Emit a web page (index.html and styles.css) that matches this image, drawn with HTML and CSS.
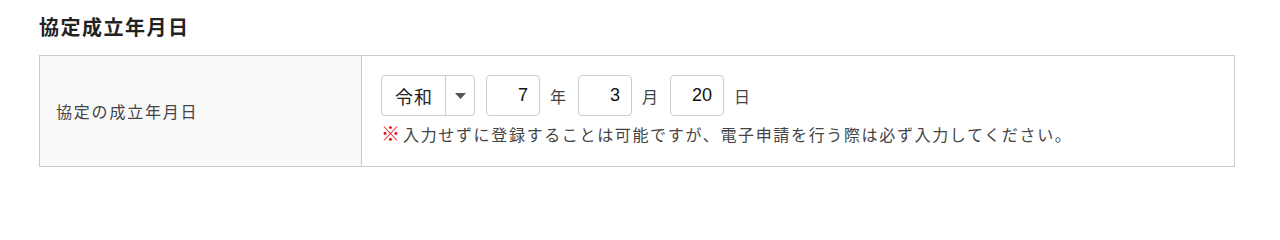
FILE: index.html
```html
<!DOCTYPE html>
<html lang="ja">
<head>
<meta charset="utf-8">
<title>協定成立年月日</title>
<link rel="stylesheet" href="styles.css">
</head>
<body>
<main class="page">
  <h2 class="section-title">協定成立年月日</h2>
  <table class="form-table">
    <tr>
      <th class="label-cell">協定の成立年月日</th>
      <td class="field-cell">
        <div class="date-row">
          <div class="era-select">
            <span class="era-value">令和</span>
            <span class="era-caret"><svg width="11" height="6" viewBox="0 0 11 6"><path d="M0 0 H11 L5.5 6 Z" fill="#555"/></svg></span>
          </div>
          <input class="num-input" type="text" value="7">
          <span class="unit">年</span>
          <input class="num-input" type="text" value="3">
          <span class="unit">月</span>
          <input class="num-input" type="text" value="20">
          <span class="unit">日</span>
        </div>
        <p class="note"><span class="mark">※</span>入力せずに登録することは可能ですが、電子申請を行う際は必ず入力してください。</p>
      </td>
    </tr>
  </table>
</main>
</body>
</html>
```

FILE: styles.css
```css
* { box-sizing: border-box; }
body {
  margin: 0;
  background: #fff;
  color: #333;
  font-family: "Noto Sans CJK JP", "Noto Sans", sans-serif;
}
.page {
  width: 1196px;
  margin-left: 39px;
}
.section-title {
  margin: 12px 0 13px;
  font-size: 20px;
  line-height: 30px;
  font-weight: bold;
  color: #222;
  letter-spacing: 1.5px;
}
.form-table {
  width: 1196px;
  border-collapse: collapse;
}
.label-cell {
  width: 322px;
  border: 1px solid #ccc;
  background: #f9f9f9;
  text-align: left;
  font-weight: normal;
  font-size: 16px;
  letter-spacing: 1.8px;
  color: #444;
  padding: 0 16px;
  vertical-align: middle;
}
.field-cell {
  border: 1px solid #ccc;
  padding: 19px 19px 20px;
  background: #fff;
}
.date-row {
  display: flex;
  align-items: center;
}
.era-select {
  display: flex;
  width: 94px;
  height: 41px;
  border: 1px solid #ccc;
  border-radius: 4px;
  background: #fff;
}
.era-value {
  width: 64px;
  display: flex;
  align-items: center;
  justify-content: center;
  font-size: 18px;
  letter-spacing: 1px;
  padding-left: 1px;
  color: #222;
  border-right: 1px solid #ccc;
}
.era-caret {
  flex: 1;
  display: flex;
  align-items: center;
  justify-content: center;
}
.num-input {
  width: 54px;
  height: 41px;
  margin-left: 12px;
  border: 1px solid #ccc;
  border-radius: 4px;
  padding: 0 11px 0 4px;
  text-align: right;
  font-family: "Liberation Sans", Arial, sans-serif;
  font-size: 18px;
  color: #111;
  background: #fff;
}
.num-input:first-of-type { margin-left: 11px; }
.unit {
  margin-left: 10px;
  width: 16px;
  font-size: 16px;
  color: #444;
}
.note {
  margin: 6px 0 0;
  font-size: 16px;
  line-height: 24px;
  letter-spacing: 1.65px;
  color: #444;
}
.mark {
  color: #e60012;
  font-weight: bold;
  font-size: 19px;
  line-height: 16px;
  letter-spacing: 0;
  margin-right: 3px;
}
```
